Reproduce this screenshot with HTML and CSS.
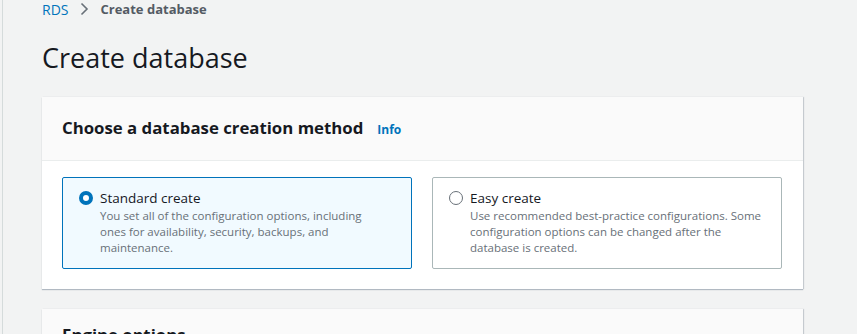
FILE: index.html
```html
<!DOCTYPE html>
<html lang="en">
<head>
    <meta charset="UTF-8">
    <meta name="viewport" content="width=device-width, initial-scale=1.0">
    <title>Create database</title>
    <link rel="stylesheet" href="styles.css">
</head>
<body>
    <div class="page">
        <nav class="breadcrumbs">
            <a href="#">RDS</a>
            <svg class="crumb-sep" width="12" height="14" viewBox="0 0 12 14">
                <path d="M3.5 1.5l5.5 5.5-5.5 5.5" fill="none" stroke="#687078" stroke-width="1.6"/>
            </svg>
            <span class="current">Create database</span>
        </nav>

        <h1>Create database</h1>

        <div class="card">
            <div class="card-header">
                <h2>Choose a database creation method</h2>
                <a href="#" class="info">Info</a>
            </div>
            <div class="card-body">
                <div class="tiles">
                    <label class="tile selected">
                        <span class="radio checked"></span>
                        <span class="tile-text">
                            <span class="tile-title">Standard create</span>
                            <span class="tile-desc">You set all of the configuration options, including<br>ones for availability, security, backups, and maintenance.</span>
                        </span>
                    </label>
                    <label class="tile">
                        <span class="radio"></span>
                        <span class="tile-text">
                            <span class="tile-title">Easy create</span>
                            <span class="tile-desc">Use recommended best-practice configurations. Some configuration options can be changed after the database is created.</span>
                        </span>
                    </label>
                </div>
            </div>
        </div>

        <div class="card">
            <div class="card-header engine">
                <h2>Engine options</h2>
            </div>
        </div>
    </div>
</body>
</html>
```

FILE: styles.css
```css
:root {
    --link-color: #0073bb;
    --text-color: #16191f;
    --muted-color: #687078;
    --page-bg: #f2f3f3;
    --border-color: #eaeded;
}

* {
    box-sizing: border-box;
    margin: 0;
    padding: 0;
}

body {
    font-family: 'Open Sans', 'Noto Sans', sans-serif;
    background-color: var(--page-bg);
    color: var(--text-color);
    padding-left: 2px;
    overflow: hidden;
}

.page {
    border-left: 1px solid #d5dbdb;
    padding: 0 0 0 39px;
    min-height: 334px;
}

.breadcrumbs {
    display: flex;
    align-items: center;
    height: 18px;
    font-size: 14px;
}

.breadcrumbs a {
    color: var(--link-color);
    text-decoration: none;
}

.crumb-sep {
    margin: 0 10px 0 10px;
}

.breadcrumbs .current {
    color: #545b64;
    font-weight: 700;
    font-size: 13px;
}

h1 {
    font-size: 27px;
    font-weight: 400;
    line-height: 36px;
    margin: 22px 0 21px;
}

.card {
    width: 761px;
    background: white;
    box-shadow: 0 1px 1px rgba(0, 31, 63, 0.25), 1px 0 1px rgba(0, 31, 63, 0.15);
    margin-bottom: 20px;
}

.card-header {
    background: #fafafa;
    border-bottom: 1px solid var(--border-color);
    display: flex;
    align-items: baseline;
    padding: 19px 20px 20px;
    height: 64px;
}

.card-header.engine {
    padding-top: 14px;
}

h2 {
    font-size: 16.8px;
    font-weight: 700;
    line-height: 24px;
}

.info {
    font-size: 12px;
    font-weight: 700;
    color: var(--link-color);
    text-decoration: none;
    margin-left: 14px;
}

.card-body {
    padding: 16px 20px 20px;
}

.tiles {
    display: grid;
    grid-template-columns: 350px 350px;
    gap: 20px;
}

.tile {
    display: flex;
    align-items: flex-start;
    border: 1px solid #aab7b8;
    border-radius: 2px;
    padding: 10px 16px 12px;
    min-height: 92px;
    cursor: pointer;
}

.tile.selected {
    border-color: var(--link-color);
    background: #f1faff;
}

.radio {
    flex: none;
    width: 14px;
    height: 14px;
    border-radius: 50%;
    border: 1.5px solid #687078;
    margin-top: 3px;
    margin-right: 7px;
    background: white;
}

.radio.checked {
    border: 4px solid var(--link-color);
}

.tile-text {
    display: flex;
    flex-direction: column;
}

.tile-title {
    font-size: 13.5px;
    line-height: 20px;
}

.tile-desc {
    font-size: 11.5px;
    line-height: 16px;
    color: var(--muted-color);
}
```
